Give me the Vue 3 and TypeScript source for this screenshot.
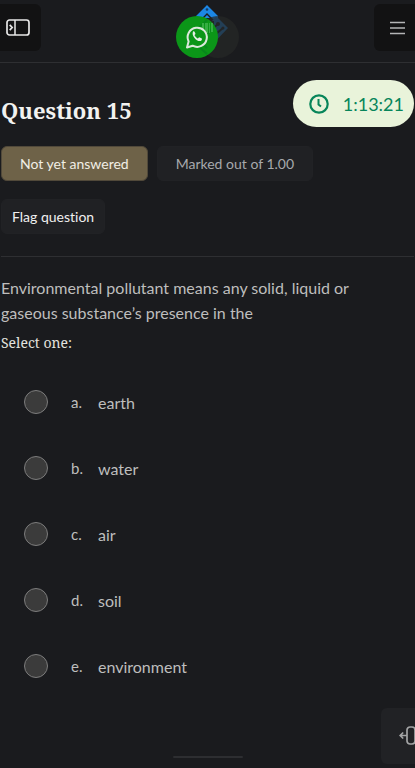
<script setup lang="ts">
import { ref } from 'vue'

interface Answer {
  letter: string
  text: string
}

const answers: Answer[] = [
  { letter: 'a', text: 'earth' },
  { letter: 'b', text: 'water' },
  { letter: 'c', text: 'air' },
  { letter: 'd', text: 'soil' },
  { letter: 'e', text: 'environment' },
]

const selected = ref<string | null>(null)
</script>

<template>
  <div class="page">
    <header class="topbar">
      <button class="bar-button left" type="button" aria-label="Open side panel">
        <svg width="24" height="18" viewBox="0 0 24 18" fill="none" stroke="#e8e8e8">
          <rect x="1" y="1" width="22" height="15" rx="2.5" stroke-width="1.7" />
          <path d="M9 1v15" stroke-width="1.5" />
          <path d="M3.7 5.8l2.5 2.7-2.5 2.7" stroke-width="1.7" />
        </svg>
      </button>
      <div class="brand">
        <svg class="logo" width="44" height="48" viewBox="0 0 44 48">
          <path d="M22 0L11 11v3h5l6-6 6 6h5v-3z" fill="#1c87e5" />
          <path d="M22 10l-3 3h6z" fill="#1c87e5" />
          <circle cx="22" cy="4.500" r="1.300" fill="#173c66" />
          <path d="M31 11l12 12-21 22-10-10z" fill="#1c76c6" />
          <g fill="none" stroke="#1b2128" stroke-width="2">
            <path d="M26 35V25l7-6M38 23l-7 6v4M22 40l4-5" />
          </g>
          <circle cx="33" cy="19" r="2" fill="#1b2128" />
          <circle cx="38" cy="23" r="1.500" fill="#1b2128" />
          <path d="M22 16h7v14h-7z" fill="#1b2128" />
          <path d="M25 18v10M27 18v10" stroke="#7b9a80" />
        </svg>
        <span class="chip-shadow"></span>
        <a class="whatsapp" href="#" aria-label="WhatsApp">
          <svg width="42" height="42" viewBox="0 0 42 42">
            <g fill="none" stroke="#08871c" stroke-width="2">
              <path d="M31 4L13 22l18 16M37 12L24 25l7 7" />
            </g>
            <path d="M26 7h2v9h-2zM29 7h3v10h-3zM33 7h1v10h-1zM35 7h2v9h-2z" fill="#35ae43" />
            <path d="M11 31.500l1.600-6a9.600 9.600 0 1 1 4 4.200z" fill="#0b9618" stroke="#dce8dc" stroke-width="2" stroke-linejoin="round" />
            <path d="M17.100 15.400c.5-.4 1.200-.3 1.500.3l.8 1.800c.2.700-.8 1.300-.8 1.700 0 .9 2.300 3 3.200 3.200.5.1 1.100-1.300 1.800-1l1.900.9c.8.400.4 1.600-.1 2.200-3 2.700-10.700-4.400-8.300-9.100z" fill="#e5eee5" />
          </svg>
        </a>
      </div>
      <button class="bar-button right" type="button" aria-label="Open menu">
        <svg width="16" height="14" viewBox="0 0 16 14" stroke="#b4b5b6" stroke-width="1.6">
          <path d="M0 1.500h15M0 7h15M0 12.500h15" />
        </svg>
      </button>
    </header>

    <main class="content">
      <div class="heading">
        <h1>Question 15</h1>
        <div class="timer" role="timer">
          <svg width="20" height="20" viewBox="0 0 20 20" fill="none" stroke="#07855a">
            <circle cx="10" cy="10" r="8.700" stroke-width="2.200" />
            <path d="M9.500 5v5.500l2.500 2" stroke-width="2" />
          </svg>
          <span>1:13:21</span>
        </div>
      </div>

      <div class="meta">
        <span class="badge state">Not yet answered</span>
        <span class="badge grade">Marked out of 1.00</span>
        <button class="badge flag" type="button">Flag question</button>
      </div>

      <form class="question" @submit.prevent>
        <p class="prompt">Environmental pollutant means any solid, liquid or gaseous substance’s presence in the</p>
        <fieldset>
          <legend>Select one:</legend>
          <label v-for="answer in answers" :key="answer.letter" class="answer">
            <input v-model="selected" type="radio" name="answer" :value="answer.letter" />
            <span class="letter">{{ answer.letter }}.</span>
            <span>{{ answer.text }}</span>
          </label>
        </fieldset>
      </form>
    </main>

    <footer class="bottom">
      <span class="home-line"></span>
      <button class="drawer" type="button" aria-label="Open block drawer">
        <svg width="22" height="20" viewBox="0 0 22 20" fill="none" stroke="#a3a4a5" stroke-width="1.700">
          <rect x="8" y="1" width="8" height="17" rx="3" />
          <path d="M8 9.500H1.500M4.200 6.500l-3 3 3 3" />
        </svg>
      </button>
    </footer>
  </div>
</template>

<style>
body {
  background: #1a1b1e;
}
</style>

<style scoped>
.page {
  display: flex;
  flex-direction: column;
  min-height: 100vh;
  overflow: hidden;
  background: #1a1b1e;
  color: #bebebd;
  font-family: Lato, sans-serif;
  font-size: 16px;
  font-variant-ligatures: none;
}

button {
  margin: 0;
  border: 0;
  font: inherit;
  font-variant-ligatures: none;
  color: inherit;
}

svg {
  display: block;
  flex-shrink: 0;
}

.topbar {
  display: grid;
  grid-template-columns: 1fr 63px 1fr;
  align-items: start;
  height: 58px;
  padding-top: 4px;
  border-bottom: 1px solid #2e2f32;
}

.bar-button {
  display: flex;
  align-items: center;
  width: 41px;
  height: 47px;
  padding: 0 0 0 6px;
  background: #121213;
}

.left {
  border-radius: 0 6px 6px 0;
}

.right {
  justify-self: end;
  padding-left: 16px;
  border-radius: 6px 0 0 6px;
}

.brand {
  position: relative;
  height: 54px;
}

.logo {
  position: absolute;
  top: 1px;
  left: 9px;
}

.chip-shadow {
  position: absolute;
  top: 12px;
  right: 0;
  width: 42px;
  height: 42px;
  border-radius: 50%;
  background: rgba(38, 40, 38, 0.7);
}

.whatsapp {
  position: absolute;
  top: 12px;
  left: 0;
  border-radius: 50%;
  background: #0b9618;
}

.content {
  padding: 17px 1px 0;
}

.heading {
  display: flex;
  align-items: center;
  justify-content: space-between;
}

h1 {
  margin: 12px 0 0;
  color: #f2f2f0;
  font-family: "Noto Serif", "DejaVu Serif Condensed", "DejaVu Serif", serif;
  font-size: 22px;
  font-weight: 700;
  line-height: 30px;
}

.timer {
  display: flex;
  align-items: center;
  gap: 14px;
  box-sizing: border-box;
  height: 47px;
  padding: 0 10px 0 16px;
  border-radius: 24px;
  background: #e9f3da;
  color: #07855a;
  font-size: 18px;
}

.meta {
  display: flex;
  flex-wrap: wrap;
  gap: 18px 9px;
  padding: 19px 0 22px;
  border-bottom: 1px solid #2e2f32;
}

.badge {
  box-sizing: border-box;
  height: 35px;
  padding: 0 18px;
  border: 1px solid #212225;
  border-radius: 6px;
  background: #202124;
  font-size: 14px;
  line-height: 33px;
}

.state {
  border-color: #51493a;
  background: #6e6248;
  color: #f1eee5;
}

.grade {
  color: #a7a9ac;
}

.flag {
  padding: 0 10px;
  color: #f0f0f0;
}

.prompt {
  margin: 18px 32px 0 0;
  line-height: 25px;
}

fieldset {
  min-width: 0;
  margin: 8px 0 0;
  padding: 0;
  border: 0;
}

legend {
  margin-bottom: 16px;
  padding: 0;
  color: #e2e2df;
  font-family: "Noto Serif", "DejaVu Serif Condensed", "DejaVu Serif", serif;
  font-size: 14px;
  line-height: 20px;
}

.answer {
  display: grid;
  grid-template-columns: 47px 27px auto;
  align-items: center;
  justify-content: start;
  height: 66px;
  padding-left: 23px;
}

.answer input {
  appearance: none;
  width: 24px;
  height: 24px;
  margin: 0;
  border: 1px solid #7c7c7c;
  border-radius: 50%;
  background: #3b3b3b;
}

.answer input:checked {
  background: #07855a;
}

.letter {
  font-size: 15px;
}

.bottom {
  display: grid;
  grid-template-columns: 1fr 70px 1fr;
  align-items: end;
  margin-top: auto;
  padding-bottom: 4px;
}

.home-line {
  grid-column: 2;
  height: 2px;
  margin-bottom: 6px;
  border-radius: 1px;
  background: #2d2e31;
}

.drawer {
  display: flex;
  align-items: center;
  justify-self: end;
  width: 34px;
  height: 56px;
  padding: 0 0 0 18px;
  border-radius: 6px 0 0 6px;
  background: #212225;
}
</style>
